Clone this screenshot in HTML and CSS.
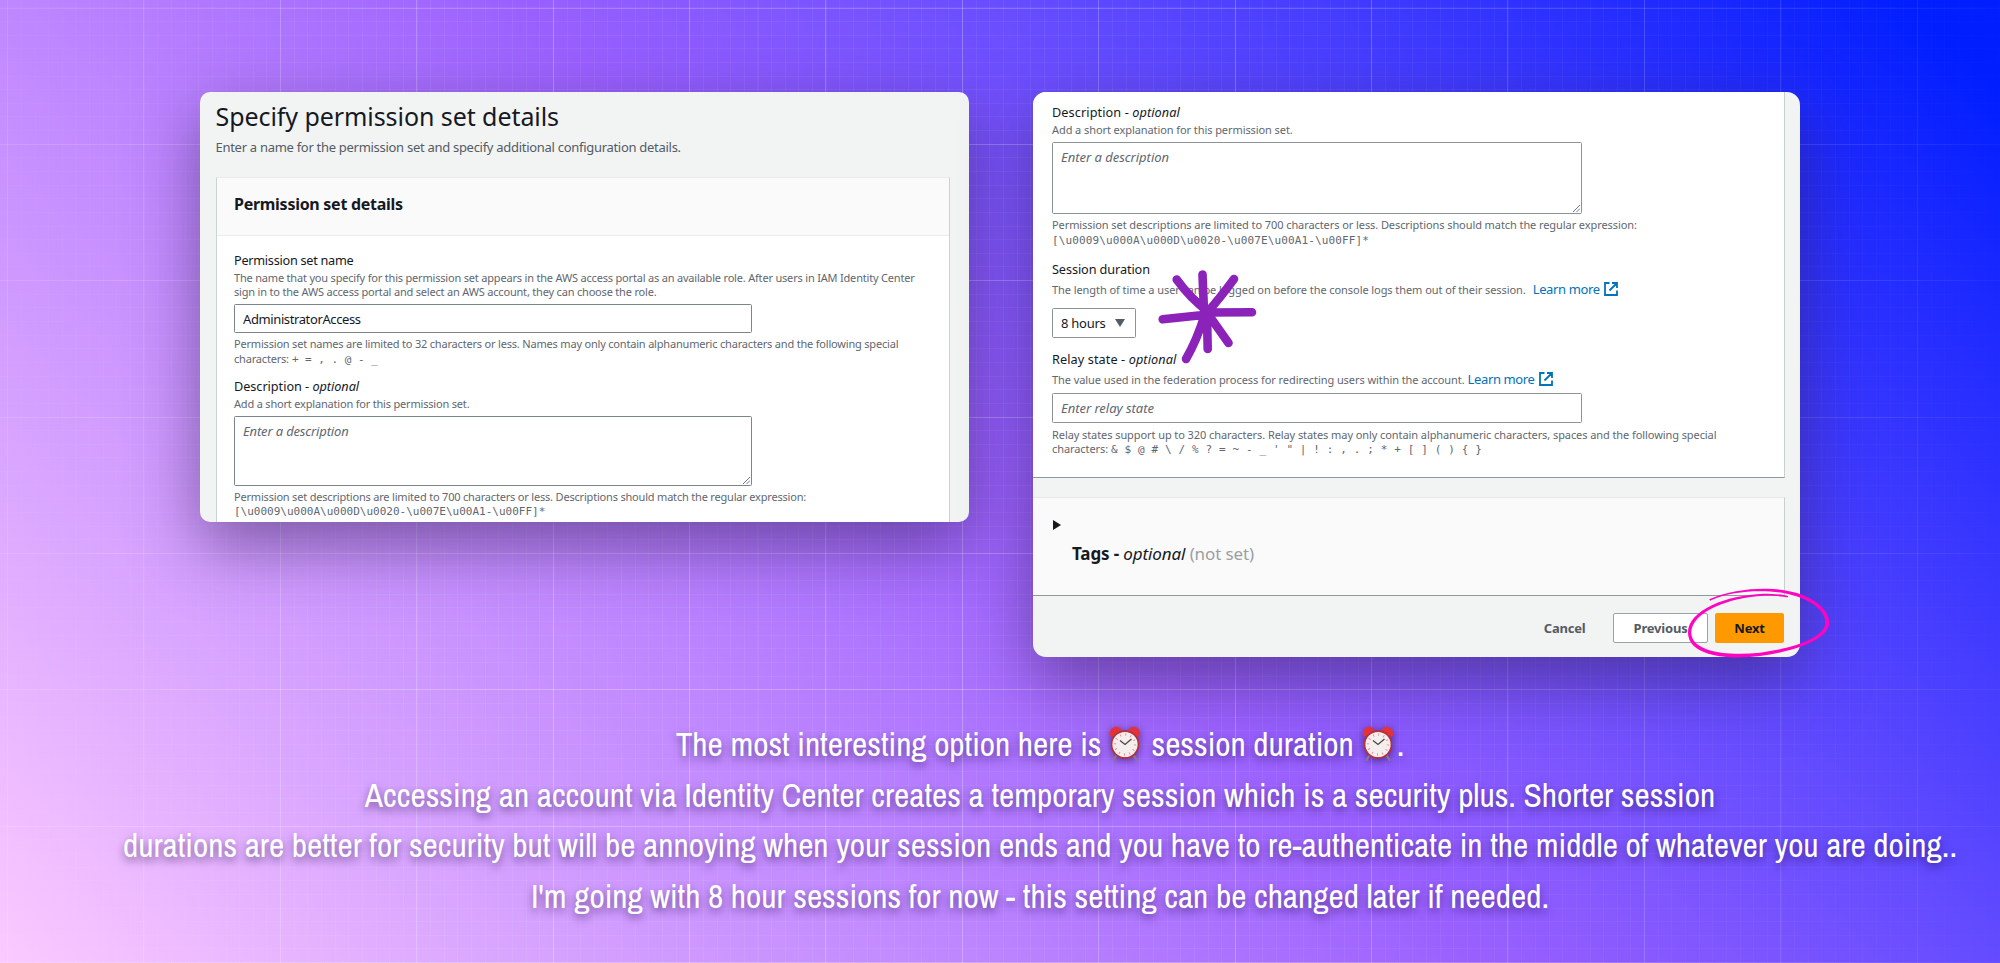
FILE: index.html
```html
<!DOCTYPE html>
<html lang="en">
<head>
<meta charset="utf-8">
<title>Permission set details</title>
<link rel="stylesheet" href="styles.css">
</head>
<body>
<svg class="defs" width="0" height="0">
  <symbol id="ext" viewBox="0 0 14 14"><path d="M5.500 1H1v12h12V8.500M8 1h5v5M13 1L5.500 8.500" fill="none" stroke="#0073bb" stroke-width="1.800"/></symbol>
  <symbol id="clock" viewBox="0 0 32 36">
    <path d="M7 30L4.500 34M25 30L27.500 34" stroke="#8d7b80" stroke-width="2" stroke-linecap="round"/>
    <path d="M1 9C0 4 4 0 9 1C11 1.500 12 3 12.500 4L3 11C2 10.700 1.300 10 1 9ZM31 9C32 4 28 0 23 1C21 1.500 20 3 19.500 4L29 11C30 10.700 30.700 10 31 9Z" fill="#e2333c"/>
    <circle cx="16" cy="18.500" r="14.300" fill="#b92f33"/>
    <circle cx="16" cy="18.500" r="12.600" fill="#f4efee"/>
    <circle cx="16" cy="18.500" r="10" fill="none" stroke="#e58b8d" stroke-width="2.400" stroke-dasharray="0.900 4.336"/>
    <path d="M11 14.500L16 18.500L22.500 13" fill="none" stroke="#4b4443" stroke-width="1.300"/>
  </symbol>
  <symbol id="grip" viewBox="0 0 8 8"><path d="M1 8L8 1M4.500 8L8 4.500" stroke="#6b7780" stroke-width="1" fill="none"/></symbol>
</svg>
<main class="slide">
  <div class="shots">
    <section class="card card-left">
      <h1 class="title">Specify permission set details</h1>
      <p class="sub">Enter a name for the permission set and specify additional configuration details.</p>
      <div class="box">
        <h2 class="box-head">Permission set details</h2>
        <div class="box-body">
          <p class="label tight">Permission set name</p>
          <p class="help">The name that you specify for this permission set appears in the AWS access portal as an available role. After users in IAM Identity Center<br>sign in to the AWS access portal and select an AWS account, they can choose the role.</p>
          <div class="input value">AdministratorAccess</div>
          <p class="help">Permission set names are limited to 32 characters or less. Names may only contain alphanumeric characters and the following special<br>characters:<code>+ = , . @ - _</code></p>
          <p class="label gap">Description - <i>optional</i></p>
          <p class="help">Add a short explanation for this permission set.</p>
          <div class="area ph">Enter a description<svg class="grip"><use href="#grip"/></svg></div>
          <p class="help">Permission set descriptions are limited to 700 characters or less. Descriptions should match the regular expression:<br><code class="first">[\u0009\u000A\u000D\u0020-\u007E\u00A1-\u00FF]*</code></p>
        </div>
      </div>
    </section>

    <section class="card card-right">
      <div class="panel">
        <p class="label">Description - <i>optional</i></p>
        <p class="help">Add a short explanation for this permission set.</p>
        <div class="area ph">Enter a description<svg class="grip"><use href="#grip"/></svg></div>
        <p class="help">Permission set descriptions are limited to 700 characters or less. Descriptions should match the regular expression:<br><code class="first">[\u0009\u000A\u000D\u0020-\u007E\u00A1-\u00FF]*</code></p>
        <p class="label gap snug">Session duration</p>
        <p class="help loose">The length of time a user can be logged on before the console logs them out of their session.<a class="link wide">Learn more<svg class="ext"><use href="#ext"/></svg></a></p>
        <div class="select">8 hours<i class="caret"></i></div>
        <p class="label gap">Relay state - <i>optional</i></p>
        <p class="help loose">The value used in the federation process for redirecting users within the account.<a class="link">Learn more<svg class="ext"><use href="#ext"/></svg></a></p>
        <div class="input ph">Enter relay state</div>
        <p class="help">Relay states support up to 320 characters. Relay states may only contain alphanumeric characters, spaces and the following special<br>characters:<code>&amp; $ @ # \ / % ? = ~ - _ ' " | ! : , . ; * + [ ] ( ) { }</code></p>
      </div>
      <div class="tags">
        <i class="arrow"></i>
        <p class="tags-title"><b>Tags - </b><i>optional</i> <span class="muted">(not set)</span></p>
      </div>
      <div class="actions">
        <span class="btn cancel">Cancel</span>
        <span class="btn prev">Previous</span>
        <span class="btn next">Next</span>
      </div>
    </section>
  </div>

  <div class="caption">
    <p>The most interesting option here is<svg class="clock"><use href="#clock"/></svg>session duration<svg class="clock last"><use href="#clock"/></svg>.</p>
    <p>Accessing an account via Identity Center creates a temporary session which is a security plus. Shorter session</p>
    <p>durations are better for security but will be annoying when your session ends and you have to re-authenticate in the middle of whatever you are doing..</p>
    <p>I'm going with 8 hour sessions for now - this setting can be changed later if needed.</p>
  </div>

  <svg class="marks" viewBox="0 0 2000 963">
    <path d="M1176.700 279.500Q1190 298 1208 311.500M1202.500 274.500L1204 311M1234 279Q1220 298 1208 311.500M1252 312.300L1208 312.500M1228.500 343L1208 314M1207.700 349L1207 313M1186 359Q1197 340 1205 314M1162.700 319.300L1208 314.500" fill="none" stroke="#8b23bb" stroke-width="8.600" stroke-linecap="round"/>
    <g transform="translate(1500 560) scale(.3333)"><path d="M628 118C700 85 800 80 860 92C940 105 988 150 988 187C988 240 880 275 780 288C690 300 565 290 564 218C564 150 680 105 790 101C820 101 850 104 864 108L864 112C850 110 820 106 790 107C690 112 574 155 574 218C574 275 680 288 780 278C880 265 976 235 976 187C976 150 930 114 850 99C790 90 700 90 630 122Z" fill="#ff05c0"/></g>
  </svg>
</main>
</body>
</html>
```
FILE: styles.css
```css
* { box-sizing: border-box; }
body, h1, h2, p { margin: 0; }
body { font-family: "Noto Sans", sans-serif; color: #16191f; overflow: hidden; }
.defs { position: absolute; }

.slide {
  position: relative;
  isolation: isolate;
  width: 2000px;
  height: 963px;
  overflow: hidden;
  background: linear-gradient(45deg, #fbcaff 0%, #dba8ff 16%, #bf87ff 32.500%, #9a60ff 50%, #654cff 67%, #1a28ff 90%, #001eff 97%);
}
/* Fine and coarse grid lines, fading towards both sides */
.slide::before {
  content: "";
  position: absolute;
  inset: 0;
  z-index: -1;
  background:
    repeating-linear-gradient(90deg, transparent 0 7px, rgba(255,255,255,.22) 7px 8px, transparent 8px 136.400px),
    repeating-linear-gradient(180deg, transparent 0 7.500px, rgba(255,255,255,.22) 7.500px 8.500px, transparent 8.500px 136.400px),
    repeating-linear-gradient(90deg, transparent 0 7.300px, rgba(255,255,255,.06) 7.300px 8.300px, transparent 8.300px 13.640px),
    repeating-linear-gradient(180deg, transparent 0 7.300px, rgba(255,255,255,.06) 7.300px 8.300px, transparent 8.300px 13.640px);
  -webkit-mask-image: linear-gradient(90deg, rgba(0,0,0,.45), #000 20%, #000 60%, rgba(0,0,0,.5) 90%, rgba(0,0,0,.15));
  mask-image: linear-gradient(90deg, rgba(0,0,0,.45), #000 20%, #000 60%, rgba(0,0,0,.5) 90%, rgba(0,0,0,.15));
}

.shots { display: flex; align-items: flex-start; gap: 64px; padding: 92px 0 0 200px; height: 719px; }
.card {
  overflow: hidden;
  background: #f2f4f4;
  box-shadow: 0 24px 66px rgba(50, 30, 80, .52);
}
.card-left { width: 769px; height: 429.500px; border-radius: 10px; padding: 9px 0 0 15.500px; }
.card-right { width: 767px; height: 564.500px; border-radius: 13px; }

.title { font-size: 25px; line-height: 30px; font-weight: 400; letter-spacing: -.07px; }
.sub { margin-top: 7px; font-size: 13px; line-height: 18px; letter-spacing: -.29px; color: #545b64; }
.box { width: 734.500px; height: 400px; margin-top: 20.500px; border: 1px solid #cdd3d3; border-top-color: #e9ecec; background: #fff; }
.box-head { height: 58px; padding: 15px 0 0 17.500px; font-size: 16px; line-height: 22px; font-weight: 700; letter-spacing: -.28px; background: #fafafa; border-bottom: 1px solid #eaeded; }
.box-body { padding: 15px 0 0 17.500px; }

.label { font-size: 12.700px; line-height: 18px; margin-bottom: 2.200px; letter-spacing: -.04px; }
.label.tight { letter-spacing: -.27px; }
.label.gap { margin-top: 10.500px; }
.help { font-size: 11px; line-height: 14.700px; letter-spacing: -.19px; color: #5f676f; white-space: nowrap; }
.help code { margin-left: 3px; font: 11px/14px "DejaVu Sans Mono", monospace; letter-spacing: 0; }
.help code.first { margin-left: 0; }
.input, .area, .select {
  position: relative;
  width: 518px;
  margin: 4px 0;
  padding: 5px 8px;
  border: 1px solid #7d858c;
  border-radius: 1.500px;
  background: #fff;
  font-size: 13px;
  line-height: 18px;
}
.input { height: 29px; }
.value { letter-spacing: -.39px; }
.area { height: 69.500px; }
.ph { font-style: italic; letter-spacing: -.15px; color: #5f676f; }
.grip { position: absolute; right: 1px; bottom: 1px; width: 8px; height: 8px; }

.panel { width: 752px; height: 386px; padding: 11px 0 0 19px; background: #fff; border-right: 1px solid #c9cfcf; border-bottom: 1.500px solid #8f999a; }
.panel .label { letter-spacing: .09px; }
.panel .label.snug { letter-spacing: -.1px; }
.panel .label.gap { margin-top: 12px; }
.panel .help { letter-spacing: -.08px; }
.panel .help code { letter-spacing: .12px; }
.panel .help.loose { margin-top: 4px; height: 15px; line-height: 15px; letter-spacing: -.07px; }
.panel .input, .panel .area { width: 530px; border-color: #8b9398; }
.panel .area { height: 72px; }
.panel .input { height: 29.500px; margin: 6.500px 0 5px; letter-spacing: .1px; }
.panel .ph { letter-spacing: -.02px; }
.panel .link { margin-left: 3px; font-size: 13px; letter-spacing: -.37px; color: #0073bb; }
.panel .link.wide { margin-left: 7px; }
.ext { width: 14px; height: 14px; margin-left: 4px; vertical-align: -2px; }
.select { display: flex; align-items: center; justify-content: space-between; width: 84px; height: 29.500px; margin: 11.500px 0 0; padding: 0 10px 0 8px; letter-spacing: -.25px; border-color: #8b9398; }
.caret { border: 5px solid transparent; border-top: 8px solid #545b64; border-bottom: 0; }

.tags { width: 752px; height: 99px; margin-top: 18.500px; padding: 22px 0 0 20px; background: #fafafa; border: 1px solid #e6eaea; border-left: 0; border-right-color: #c9cfcf; border-bottom: 1.500px solid #8f999a; }
.arrow { display: block; width: 0; border: 5px solid transparent; border-left: 8px solid #16191f; border-right: 0; }
.tags-title { margin: 13px 0 0 19px; font-size: 17px; line-height: 22px; letter-spacing: -.12px; }
.muted { color: #9a9fa2; }

.actions { display: flex; align-items: center; justify-content: flex-end; padding: 17.500px 16px 0 0; font-size: 13px; font-weight: 700; line-height: 18px; letter-spacing: -.2px; color: #545b64; }
.btn { display: flex; align-items: center; justify-content: center; height: 30px; border-radius: 2px; }
.prev { width: 95px; margin: 0 7px 0 27.500px; background: #fff; border: 1px solid #9aa2a6; }
.next { width: 69px; background: #f90; color: #16191f; }

.caption { width: 2080px; color: #fff; font: 33.370px/50.600px "Archivo Narrow", "Roboto Condensed", sans-serif; text-align: center; text-shadow: 0 4px 8px rgba(30, 10, 60, .55); }
.caption p { white-space: nowrap; }
.clock { width: 32px; height: 36px; margin: 0 10px 0 8px; vertical-align: -6px; filter: drop-shadow(0 2px 4px rgba(30, 10, 60, .6)); }
.clock.last { margin-right: 3px; }
.marks { position: absolute; inset: 0; width: 2000px; height: 963px; }
```
